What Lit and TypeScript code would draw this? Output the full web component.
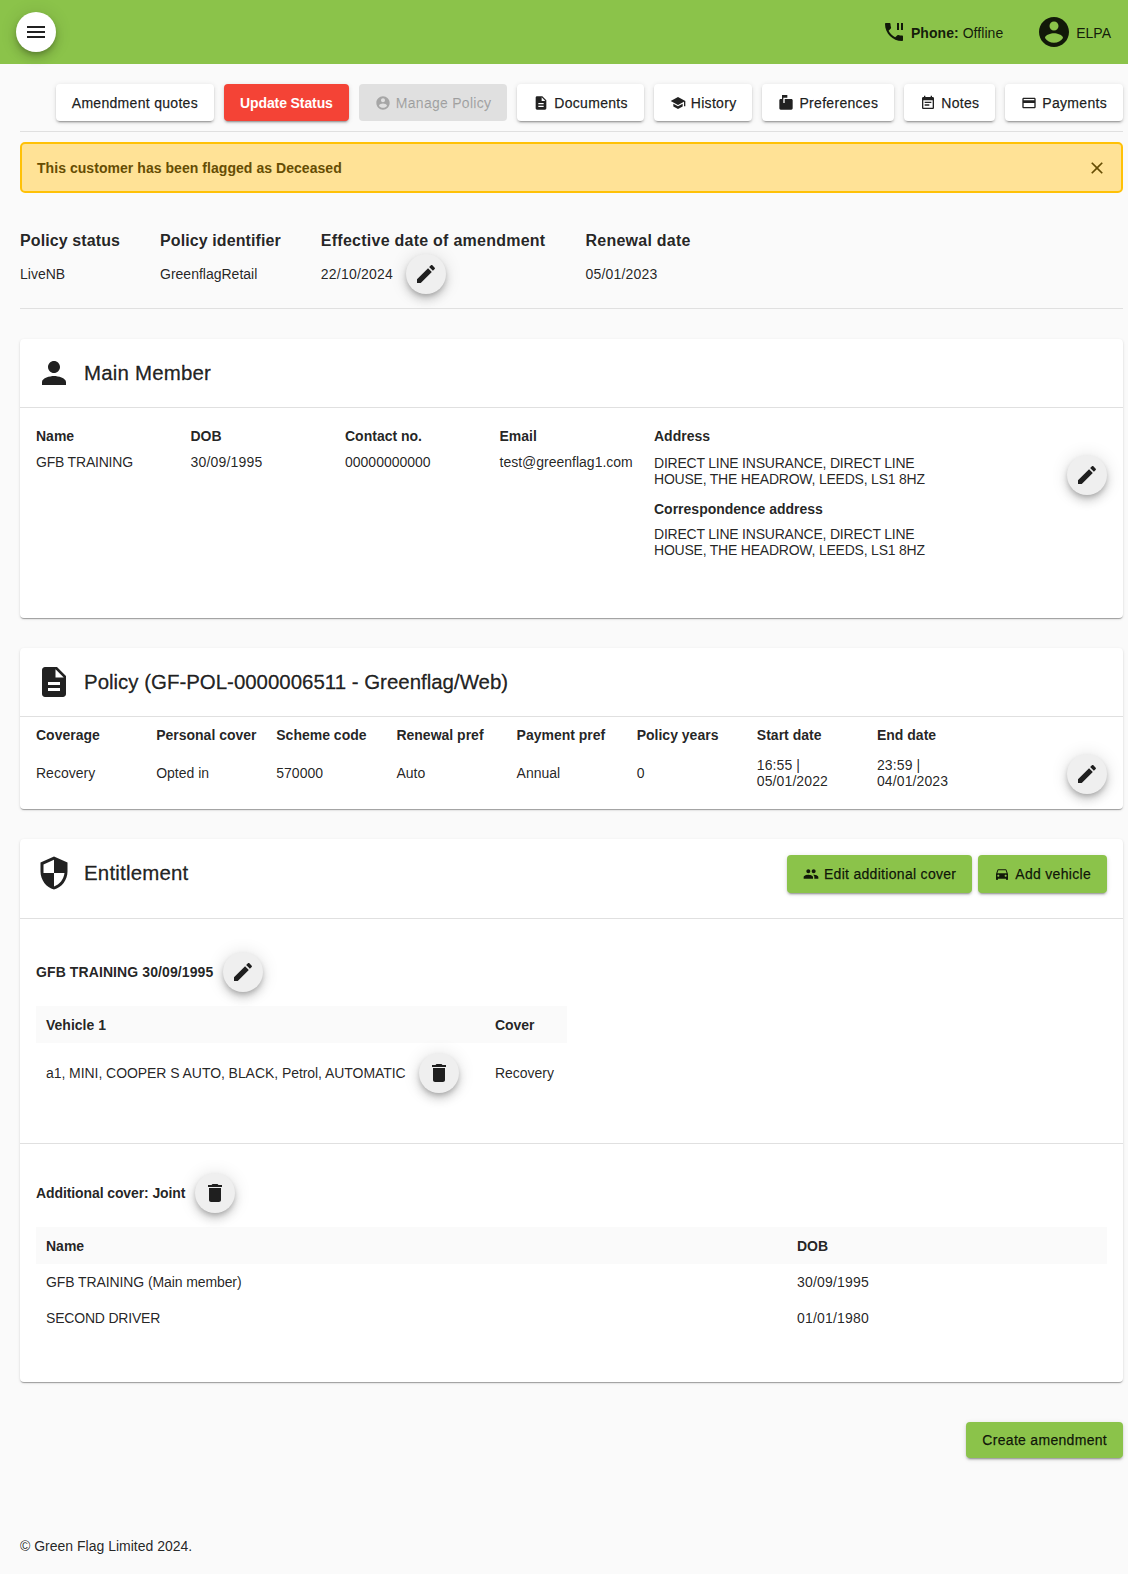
import { LitElement, css, html, svg } from 'lit';
import { customElement } from 'lit/decorators.js';

const ICONS: Record<string, string> = {
  menu: 'M3 18h18v-2H3v2zm0-5h18v-2H3v2zm0-7v2h18V6H3z',
  edit: 'M3 17.25V21h3.75L17.81 9.94l-3.75-3.75L3 17.25zM20.71 7.04c.39-.39.39-1.02 0-1.41l-2.34-2.34c-.39-.39-1.02-.39-1.41 0l-1.83 1.83 3.75 3.75 1.83-1.83z',
  trash: 'M6 19c0 1.1.9 2 2 2h8c1.1 0 2-.9 2-2V7H6v12zM19 4h-3.5l-1-1h-5l-1 1H5v2h14V4z',
  person: 'M12 12c2.21 0 4-1.79 4-4s-1.79-4-4-4-4 1.79-4 4 1.79 4 4 4zm0 2c-2.67 0-8 1.34-8 4v2h16v-2c0-2.66-5.33-4-8-4z',
  doc: 'M14 2H6c-1.1 0-1.99.9-1.99 2L4 20c0 1.1.89 2 1.99 2H18c1.1 0 2-.9 2-2V8l-6-6zm2 16H8v-2h8v2zm0-4H8v-2h8v2zm-3-5V3.5L18.5 9H13z',
  shield: 'M12 1L3 5v6c0 5.55 3.84 10.74 9 12 5.16-1.26 9-6.45 9-12V5l-9-4zm0 10.99h7c-.53 4.12-3.28 7.79-7 8.94V12H5V6.3l7-3.11v8.8z',
  account: 'M12 2C6.48 2 2 6.48 2 12s4.48 10 10 10 10-4.48 10-10S17.52 2 12 2zm0 3c1.66 0 3 1.34 3 3s-1.34 3-3 3-3-1.34-3-3 1.34-3 3-3zm0 14.2c-2.5 0-4.71-1.28-6-3.22.03-1.99 4-3.08 6-3.08 1.99 0 5.97 1.09 6 3.08-1.29 1.94-3.5 3.22-6 3.22z',
  phone: 'M17 3h-2v7h2V3zm3 12.5c-1.25 0-2.45-.2-3.57-.57-.35-.11-.74-.03-1.02.24l-2.2 2.2c-2.83-1.44-5.15-3.75-6.59-6.59l2.2-2.21c.28-.26.36-.65.25-1C8.7 6.45 8.5 5.25 8.5 4c0-.55-.45-1-1-1H4c-.55 0-1 .45-1 1 0 9.39 7.61 17 17 17 .55 0 1-.45 1-1v-3.5c0-.55-.45-1-1-1zM19 3v7h2V3h-2z',
  school: 'M5 13.18v4L12 21l7-3.82v-4L12 17l-7-3.82zM12 3L1 9l11 6 9-4.91V17h2V9L12 3z',
  mailbox: 'M20 6H10v6H8V4h6V0H6v6H4c-1.1 0-2 .9-2 2v12c0 1.1.9 2 2 2h16c1.1 0 2-.9 2-2V8c0-1.1-.9-2-2-2z',
  note: 'M17 10H7v2h10v-2zm2-7h-1V1h-2v2H8V1H6v2H5c-1.11 0-1.99.9-1.99 2L3 19c0 1.1.89 2 2 2h14c1.1 0 2-.9 2-2V5c0-1.1-.9-2-2-2zm0 16H5V8h14v11zm-5-5H7v2h7v-2z',
  payment: 'M20 4H4c-1.11 0-1.99.89-1.99 2L2 18c0 1.11.89 2 2 2h16c1.11 0 2-.89 2-2V6c0-1.11-.89-2-2-2zm0 14H4v-6h16v6zm0-10H4V6h16v2z',
  people: 'M16 11c1.66 0 2.99-1.34 2.99-3S17.66 5 16 5c-1.66 0-3 1.34-3 3s1.34 3 3 3zm-8 0c1.66 0 2.99-1.34 2.99-3S9.66 5 8 5C6.34 5 5 6.34 5 8s1.34 3 3 3zm0 2c-2.33 0-7 1.17-7 3.5V19h14v-2.5c0-2.33-4.67-3.5-7-3.5zm8 0c-.29 0-.62.02-.97.05 1.16.84 1.97 1.97 1.97 3.45V19h6v-2.5c0-2.33-4.67-3.5-7-3.5z',
  car: 'M18.92 6.01C18.72 5.42 18.16 5 17.5 5h-11c-.66 0-1.21.42-1.42 1.01L3 12v8c0 .55.45 1 1 1h1c.55 0 1-.45 1-1v-1h12v1c0 .55.45 1 1 1h1c.55 0 1-.45 1-1v-8l-2.08-5.99zM6.5 16c-.83 0-1.5-.67-1.5-1.5S5.67 13 6.5 13s1.5.67 1.5 1.5S7.33 16 6.5 16zm11 0c-.83 0-1.5-.67-1.5-1.5s.67-1.5 1.5-1.5 1.5.67 1.5 1.5-.67 1.5-1.5 1.5zM5 11l1.5-4.5h11L19 11H5z',
  close: 'M19 6.41L17.59 5 12 10.59 6.41 5 5 6.41 10.59 12 5 17.59 6.41 19 12 13.41 17.59 19 19 17.59 13.41 12z',
};

const icon = (name: string, size = 24) => html`<svg class="icon" width=${size} height=${size} viewBox="0 0 24 24" fill="currentColor">${svg`<path d=${ICONS[name]}></path>`}</svg>`;

const fab = (name: string) => html`<button class="fab">${icon(name)}</button>`;

@customElement('app-root')
export class AppRoot extends LitElement {
  static styles = css`
    :host {
      display: block;
      min-height: 1574px;
      background: #fafafa;
      color: rgba(0, 0, 0, 0.87);
      font-family: 'Liberation Sans', Arial, sans-serif;
      font-size: 14px;
      line-height: 16px;
    }
    .icon { display: block; flex: none; }
    b, h2, h3, h4, th { font-weight: 700; }
    .topbar {
      height: 64px;
      background: #8bc34a;
      display: flex;
      align-items: center;
      justify-content: space-between;
      padding: 0 17px 0 16px;
      box-sizing: border-box;
    }
    .menu {
      width: 40px;
      height: 40px;
      border: none;
      border-radius: 50%;
      background: #fff;
      color: rgba(0, 0, 0, 0.87);
      display: flex;
      align-items: center;
      justify-content: center;
      padding: 0;
      box-shadow: 0 3px 5px -1px rgba(0,0,0,.2), 0 6px 10px 0 rgba(0,0,0,.14), 0 1px 18px 0 rgba(0,0,0,.12);
    }
    .topright { display: flex; align-items: center; color: rgba(0, 0, 0, 0.87); }
    .phone { display: flex; align-items: center; gap: 5px; margin-right: 33px; letter-spacing: 0.05px; }
    .user { display: flex; align-items: center; gap: 4px; }
    .topright span { padding-top: 1px; }
    .content { padding: 20px 5px 0 20px; }
    .toolbar {
      display: flex;
      justify-content: flex-end;
      gap: 10px;
      padding-bottom: 10px;
      border-bottom: 1px solid #e0e0e0;
    }
    .btn {
      height: 37px;
      padding: 0 16px;
      border: none;
      border-radius: 4px;
      background: #fff;
      color: rgba(0, 0, 0, 0.87);
      font: inherit;
      font-weight: 400;
      letter-spacing: 0.3px;
      display: flex;
      align-items: center;
      gap: 5px;
      white-space: nowrap;
      -webkit-text-stroke: 0.25px currentColor;
      box-shadow: 0 3px 1px -2px rgba(0,0,0,.2), 0 2px 2px 0 rgba(0,0,0,.14), 0 1px 5px 0 rgba(0,0,0,.12);
    }
    .btn.red { background: #f44336; color: #fff; font-weight: 700; letter-spacing: -0.1px; -webkit-text-stroke: 0; }
    .btn.off { background: #e0e0e0; color: rgba(0, 0, 0, 0.26); box-shadow: none; letter-spacing: 0.28px; }
    .btn.green { background: #8bc34a; }
    .alert {
      margin-top: 10px;
      height: 51px;
      box-sizing: border-box;
      display: flex;
      align-items: center;
      justify-content: space-between;
      padding: 0 14px 0 15px;
      background: #ffe296;
      border: 2px solid #ffc107;
      border-radius: 5px;
      color: #664d03;
      font-weight: 700;
      letter-spacing: 0.05px;
    }
    .summary {
      display: flex;
      gap: 40px;
      margin-top: 39px;
      padding-bottom: 14px;
      border-bottom: 1px solid #e0e0e0;
    }
    .summary h4 { margin: 0 0 4px; font-size: 16px; line-height: 18px; letter-spacing: 0.1px; }
    .summary h4.wide { letter-spacing: 0.25px; }
    .summary .val { display: flex; align-items: center; gap: 13px; height: 40px; }
    .date { letter-spacing: 0.2px; }
    .fab {
      width: 40px;
      height: 40px;
      flex: none;
      border: none;
      border-radius: 50%;
      padding: 0;
      background: #efefef;
      color: rgba(0, 0, 0, 0.87);
      display: flex;
      align-items: center;
      justify-content: center;
      box-shadow: 0 3px 5px -1px rgba(0,0,0,.2), 0 6px 10px 0 rgba(0,0,0,.14), 0 1px 18px 0 rgba(0,0,0,.12);
    }
    .card {
      margin-top: 30px;
      background: #fff;
      border-radius: 4px;
      box-shadow: 0 2px 1px -1px rgba(0,0,0,.2), 0 1px 1px 0 rgba(0,0,0,.14), 0 1px 3px 0 rgba(0,0,0,.12);
    }
    .card-head {
      display: flex;
      align-items: center;
      gap: 12px;
      height: 69px;
      box-sizing: border-box;
      padding: 0 16px;
      border-bottom: 1px solid #e0e0e0;
    }
    .card-head h2 { margin: 0; font-size: 20.45px; font-weight: 400; line-height: 24px; -webkit-text-stroke: 0.3px currentColor; }
    .card-head h2.wide { letter-spacing: 0.2px; }
    .card-head.tall { height: 80px; padding-bottom: 11px; }
    .card-head.tall .btn { height: 38px; }
    .head-actions { margin: 1px 0 0 auto; display: flex; gap: 6px; }
    .member {
      display: grid;
      grid-template-columns: repeat(4, 154.5px) 1fr 40px;
      padding: 20px 16px 0;
      height: 190px;
      align-items: start;
    }
    .label { font-weight: 700; margin-bottom: 10px; }
    .member .fab { margin-top: 27px; }
    .caps { letter-spacing: -0.2px; }
    .addr { width: 280px; letter-spacing: -0.22px; }
    .addr .label { letter-spacing: 0; margin-bottom: 11px; }
    .addr .label.second { margin: 14px 0 9px; }
    .cover {
      display: grid;
      grid-template-columns: repeat(8, 120.15px) 1fr;
      height: 92px;
      padding: 10px 16px 0;
      box-sizing: border-box;
    }
    .cover .label { margin-bottom: 22px; height: 16px; }
    .cover .val2 { margin-top: -8px; width: 90px; letter-spacing: 0.1px; }
    .cover .fab { grid-row: 1; grid-column: 9; justify-self: end; margin-top: 27px; align-self: start; }
    .section { padding: 0 16px; }
    .section + .section { border-top: 1px solid #e0e0e0; }
    .section h3 { margin: 0; font-size: 14px; line-height: 16px; }
    .s1 h3 { letter-spacing: 0.1px; }
    .s2 h3 { letter-spacing: -0.1px; }
    .sub { display: flex; align-items: center; gap: 10px; height: 40px; }
    table { border-collapse: collapse; }
    th { text-align: left; background: #fafafa; height: 37px; padding: 0 10px; }
    td { padding: 0 10px; }
    .vehicles { margin-top: 14px; width: 531px; }
    .vehicles td { height: 60px; }
    .cell { display: flex; align-items: center; gap: 13px; white-space: nowrap; letter-spacing: -0.06px; }
    .joint { margin-top: 14px; width: 100%; table-layout: fixed; }
    .joint td { height: 36px; }
    .joint .dob { width: 300px; }
    .joint .main { letter-spacing: -0.1px; }
    .s1 { padding-top: 33px; height: 224px; box-sizing: border-box; }
    .s2 { padding-top: 29px; height: 239px; box-sizing: border-box; }
    .actions { display: flex; justify-content: flex-end; margin-top: 40px; }
    .actions .btn { height: 36px; }
    .foot { margin-top: 80px; line-height: 16px; }
  `;

  render() {
    return html`
      <div class="topbar">
        <button class="menu">${icon('menu')}</button>
        <div class="topright">
          <div class="phone">${icon('phone')}<span><b>Phone:</b> Offline</span></div>
          <div class="user">${icon('account', 36)}<span>ELPA</span></div>
        </div>
      </div>
      <div class="content">
        <div class="toolbar">
          <button class="btn">Amendment quotes</button>
          <button class="btn red">Update Status</button>
          <button class="btn off">${icon('account', 16)}Manage Policy</button>
          <button class="btn">${icon('doc', 16)}Documents</button>
          <button class="btn">${icon('school', 16)}History</button>
          <button class="btn">${icon('mailbox', 16)}Preferences</button>
          <button class="btn">${icon('note', 16)}Notes</button>
          <button class="btn">${icon('payment', 16)}Payments</button>
        </div>
        <div class="alert">
          <span>This customer has been flagged as Deceased</span>
          ${icon('close', 20)}
        </div>
        <div class="summary">
          <div><h4>Policy status</h4><div class="val">LiveNB</div></div>
          <div><h4>Policy identifier</h4><div class="val">GreenflagRetail</div></div>
          <div><h4 class="wide">Effective date of amendment</h4><div class="val"><span class="date">22/10/2024</span>${fab('edit')}</div></div>
          <div><h4 class="wide">Renewal date</h4><div class="val"><span class="date">05/01/2023</span></div></div>
        </div>

        <section class="card">
          <div class="card-head">${icon('person', 36)}<h2 class="wide">Main Member</h2></div>
          <div class="member">
            <div><div class="label">Name</div><span class="caps">GFB TRAINING</span></div>
            <div><div class="label">DOB</div><span class="date">30/09/1995</span></div>
            <div><div class="label">Contact no.</div>00000000000</div>
            <div><div class="label">Email</div>test@greenflag1.com</div>
            <div class="addr">
              <div class="label">Address</div>
              DIRECT LINE INSURANCE, DIRECT LINE HOUSE, THE HEADROW, LEEDS, LS1 8HZ
              <div class="label second">Correspondence address</div>
              DIRECT LINE INSURANCE, DIRECT LINE HOUSE, THE HEADROW, LEEDS, LS1 8HZ
            </div>
            ${fab('edit')}
          </div>
        </section>

        <section class="card">
          <div class="card-head">${icon('doc', 36)}<h2>Policy (GF-POL-0000006511 - Greenflag/Web)</h2></div>
          <div class="cover">
            <div><div class="label">Coverage</div>Recovery</div>
            <div><div class="label">Personal cover</div>Opted in</div>
            <div><div class="label">Scheme code</div>570000</div>
            <div><div class="label">Renewal pref</div>Auto</div>
            <div><div class="label">Payment pref</div>Annual</div>
            <div><div class="label">Policy years</div>0</div>
            <div><div class="label">Start date</div><div class="val2">16:55 | 05/01/2022</div></div>
            <div><div class="label">End date</div><div class="val2">23:59 | 04/01/2023</div></div>
            ${fab('edit')}
          </div>
        </section>

        <section class="card">
          <div class="card-head tall">
            ${icon('shield', 36)}<h2 class="wide">Entitlement</h2>
            <div class="head-actions">
              <button class="btn green">${icon('people', 16)}Edit additional cover</button>
              <button class="btn green">${icon('car', 16)}Add vehicle</button>
            </div>
          </div>
          <div class="section s1">
            <div class="sub"><h3>GFB TRAINING 30/09/1995</h3>${fab('edit')}</div>
            <table class="vehicles">
              <tr><th>Vehicle 1</th><th>Cover</th></tr>
              <tr>
                <td><div class="cell">a1, MINI, COOPER S AUTO, BLACK, Petrol, AUTOMATIC ${fab('trash')}</div></td>
                <td>Recovery</td>
              </tr>
            </table>
          </div>
          <div class="section s2">
            <div class="sub"><h3>Additional cover: Joint</h3>${fab('trash')}</div>
            <table class="joint">
              <tr><th>Name</th><th class="dob">DOB</th></tr>
              <tr><td class="main">GFB TRAINING (Main member)</td><td class="date">30/09/1995</td></tr>
              <tr><td class="caps">SECOND DRIVER</td><td class="date">01/01/1980</td></tr>
            </table>
          </div>
        </section>

        <div class="actions"><button class="btn green">Create amendment</button></div>
        <div class="foot">© Green Flag Limited 2024.</div>
      </div>
    `;
  }
}

declare global {
  interface HTMLElementTagNameMap {
    'app-root': AppRoot;
  }
}
